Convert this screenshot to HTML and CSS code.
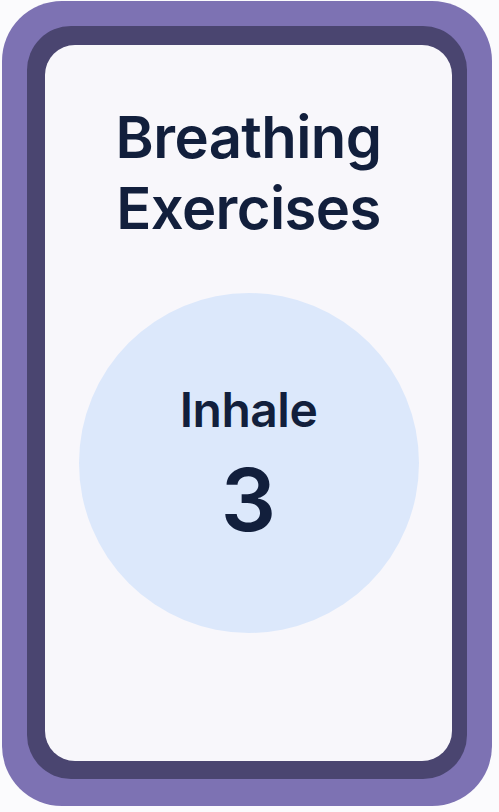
FILE: index.html
```html
<!DOCTYPE html>
<html lang="en">
<head>
  <meta charset="UTF-8">
  <meta name="viewport" content="width=device-width, initial-scale=1.0">
  <title>Breathing Exercises</title>
  <link rel="stylesheet" href="styles.css">
</head>
<body>
  <div class="phone">
    <div class="bezel">
      <div class="screen">
        <h1 class="title">Breathing Exercises</h1>
        <div class="circle">
          <div class="phase">Inhale</div>
          <div class="count">3</div>
        </div>
      </div>
    </div>
  </div>
</body>
</html>
```

FILE: styles.css
```css
body {
  margin: 0;
  padding: 0;
  background-color: #fbfbfd;
  font-family: Inter, "Noto Sans", sans-serif;
  color: #121f3c;
}

.phone {
  box-sizing: border-box;
  width: 490px;
  height: 805px;
  margin: 1px 0 0 2px;
  padding: 25px 25px 27px 25px;
  background-color: #7d72b3;
  border-radius: 60px;
}

.bezel {
  box-sizing: border-box;
  height: 100%;
  padding: 19px 15px 18px 18px;
  background-color: #4a4570;
  border-radius: 44px;
}

.screen {
  box-sizing: border-box;
  height: 100%;
  display: flex;
  flex-direction: column;
  align-items: center;
  background-color: #f8f7fb;
  border-radius: 30px;
}

.title {
  margin: 57px 0 0 0;
  width: 340px;
  text-align: center;
  font-size: 58px;
  font-weight: 600;
  letter-spacing: -0.6px;
  line-height: 71px;
}

.circle {
  box-sizing: border-box;
  width: 340px;
  height: 340px;
  margin-top: 49px;
  padding-top: 89px;
  border-radius: 50%;
  background-color: #dce8fb;
  display: flex;
  flex-direction: column;
  align-items: center;
}

.phase {
  font-size: 48px;
  font-weight: 600;
  letter-spacing: -0.5px;
  line-height: 56px;
}

.count {
  margin-top: 17px;
  font-size: 87px;
  font-weight: 600;
  line-height: 90px;
}
```
